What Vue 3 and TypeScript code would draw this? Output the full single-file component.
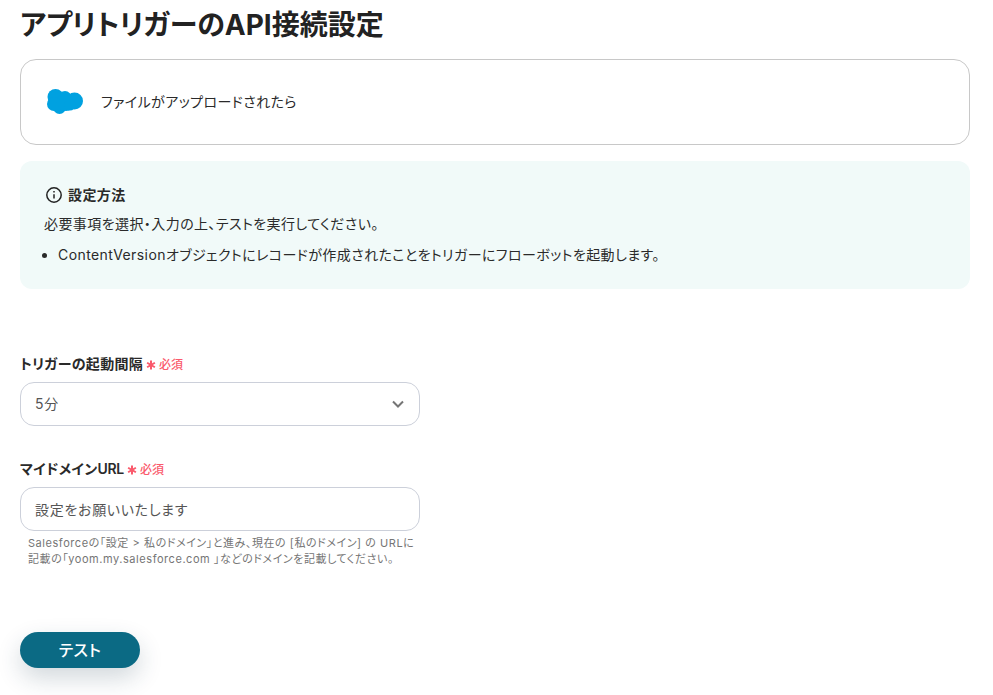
<script setup lang="ts">
const title: string = 'アプリトリガーのAPI接続設定'
</script>

<template>
  <main class="page">
    <h1 class="title">{{ title }}</h1>
    <section class="app-card">
      <svg class="logo" width="38" height="29" viewBox="0 0 38 29">
        <g fill="#00a1e0">
          <circle cx="9.5" cy="10" r="8" />
          <circle cx="19" cy="10.5" r="6.5" />
          <circle cx="28.5" cy="14" r="8.5" />
          <circle cx="8" cy="17" r="7" />
          <circle cx="13.5" cy="20.5" r="6.5" />
          <circle cx="20" cy="16" r="8" />
          <circle cx="24" cy="18" r="5.5" />
        </g>
      </svg>
      <span class="app-text">ファイルがアップロードされたら</span>
    </section>
    <section class="info">
      <div class="info-head">
        <svg width="18" height="18" viewBox="0 0 18 18" fill="none" stroke="#222" stroke-width="1.5">
          <circle cx="9" cy="9" r="7.2" />
          <path d="M9 8.2v4.4" />
          <path d="M9 5v1.6" />
        </svg>
        <strong>設定方法</strong>
      </div>
      <p class="info-text">必要事項を選択・入力の上、テストを実行してください。</p>
      <ul class="info-list">
        <li>ContentVersionオブジェクトにレコードが作成されたことをトリガーにフローボットを起動します。</li>
      </ul>
    </section>
    <form class="form" @submit.prevent>
      <div class="field">
        <div class="label">
          トリガーの起動間隔
          <span class="req">
            <svg class="star" width="10" height="10" viewBox="0 0 10 10" stroke="#fa5a6c" stroke-width="2">
              <path d="M5 .5v9M1.1 2.75l7.8 4.5M8.9 2.75l-7.8 4.5" />
            </svg>
            <span class="req-text">必須</span>
          </span>
        </div>
        <div class="control">
          <span class="value">5分</span>
          <svg width="14" height="14" viewBox="0 0 14 14" fill="none" stroke="#757575" stroke-width="2">
            <path d="M2 4.5l5 5 5-5" />
          </svg>
        </div>
      </div>
      <div class="field second">
        <div class="label">
          <span>マイドメイン<span class="latin">URL</span></span>
          <span class="req">
            <svg class="star" width="10" height="10" viewBox="0 0 10 10" stroke="#fa5a6c" stroke-width="2">
              <path d="M5 .5v9M1.1 2.75l7.8 4.5M8.9 2.75l-7.8 4.5" />
            </svg>
            <span class="req-text">必須</span>
          </span>
        </div>
        <div class="control"><span>設定をお願いいたします</span></div>
        <p class="help">Salesforceの「設定 &gt; 私のドメイン」と進み、現在の [私のドメイン] の URLに記載の「yoom.my.salesforce.com 」などのドメインを記載してください。</p>
      </div>
      <button class="test" type="button">テスト</button>
    </form>
  </main>
</template>

<style scoped>
.page {
  width: 950px;
  min-height: 695px;
  margin-left: 20px;
  font-family: Inter, "Noto Sans CJK JP", sans-serif;
  font-feature-settings: "palt";
  color: #2a2a2a;
}
.title {
  margin: 0;
  padding-top: 6px;
  height: 59px;
  box-sizing: border-box;
  font-size: 28px;
  line-height: 38px;
  font-weight: 700;
  color: #222;
}
.app-card {
  height: 86px;
  box-sizing: border-box;
  border: 1px solid #c8c8c8;
  border-radius: 16px;
  display: flex;
  align-items: center;
  gap: 17px;
  padding-left: 25px;
  font-size: 14px;
  letter-spacing: 0.42px;
}
.app-text { margin-top: -3px; }
.logo { margin-top: -2px; }
.info {
  margin-top: 16px;
  height: 128px;
  box-sizing: border-box;
  background: #f1faf9;
  border-radius: 12px;
  padding: 23px 24px 0;
  font-size: 14px;
  letter-spacing: 0.42px;
}
.info-head {
  display: flex;
  align-items: center;
  gap: 5px;
  padding-left: 1px;
  height: 20px;
  font-size: 14px;
}
.info-head svg { margin-top: 1px; }
.info-head strong { font-weight: 700; color: #2a2a2a; }
.info-text {
  margin: 10px 0 0;
  line-height: 20px;
}
.info-list {
  margin: 11px 0 0;
  padding-left: 14px;
  line-height: 20px;
}
.form { padding-top: 65px; }
.field { width: 400px; }
.second { margin-top: 33px; }
.label {
  display: flex;
  align-items: center;
  gap: 3px;
  height: 20px;
  line-height: 20px;
  margin-bottom: 8px;
  font-size: 14px;
  font-weight: 600;
  color: #2a2a2a;
  letter-spacing: 0.3px;
}
.latin { letter-spacing: -0.3px; }
.req {
  display: inline-flex;
  align-items: center;
  gap: 3px;
  color: #fa5a6c;
  font-size: 12px;
  font-weight: 500;
  letter-spacing: 0;
}
.req-text { margin-top: 2px; }
.star { flex: none; margin-top: 1px; }
.control {
  height: 44px;
  box-sizing: border-box;
  border: 1px solid #ccd0da;
  border-radius: 14px;
  display: flex;
  align-items: center;
  justify-content: space-between;
  padding: 0 14px;
  font-size: 14px;
  letter-spacing: 0.7px;
  color: #555;
}
.value { margin-top: -2px; }
.help {
  margin: 4px 0 0;
  padding: 0 0 0 8px;
  font-size: 11px;
  line-height: 16px;
  color: #757575;
  letter-spacing: 0.55px;
}
.test {
  display: block;
  margin-top: 65px;
  width: 120px;
  height: 36px;
  padding: 0 0 2px;
  border: 0;
  border-radius: 18px;
  background: #0b6a84;
  color: #fff;
  font: inherit;
  font-size: 16px;
  font-weight: 500;
  letter-spacing: 0.5px;
  box-shadow: 0 10px 24px rgba(30, 60, 80, 0.2);
}
</style>

<style>
html, body { background: #fff; }
</style>
